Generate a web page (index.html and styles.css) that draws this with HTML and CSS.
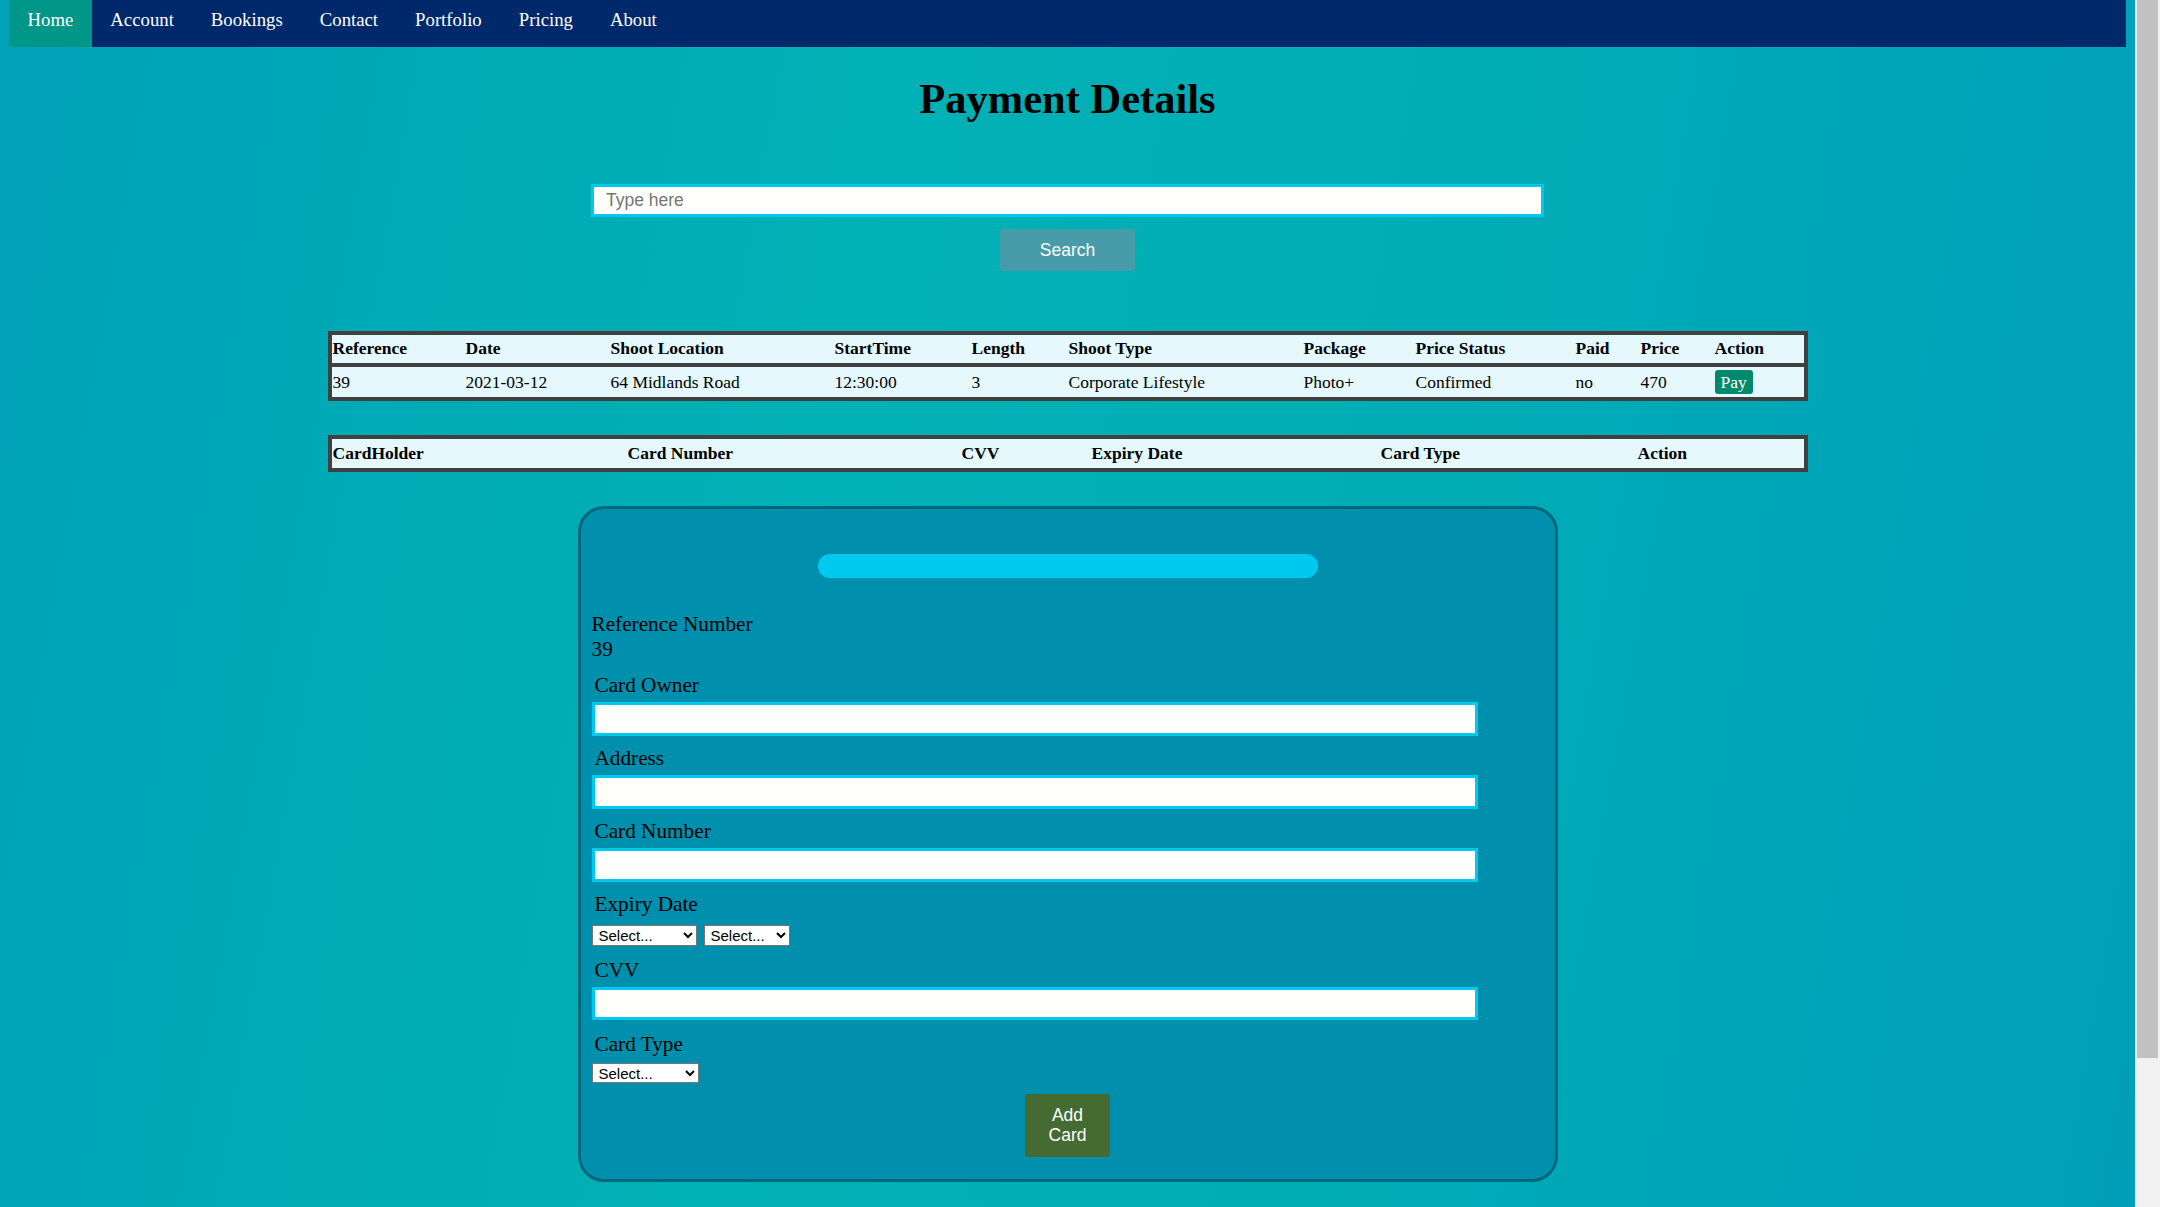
FILE: index.html
```html
<!DOCTYPE html>
<html lang="en">
<head>
<meta charset="utf-8">
<title>Payment Details</title>
<link rel="stylesheet" href="styles.css">
</head>
<body>
<div class="page">
  <nav class="topnav">
    <a class="nav-link active" href="#">Home</a>
    <a class="nav-link" href="#">Account</a>
    <a class="nav-link" href="#">Bookings</a>
    <a class="nav-link" href="#">Contact</a>
    <a class="nav-link" href="#">Portfolio</a>
    <a class="nav-link" href="#">Pricing</a>
    <a class="nav-link" href="#">About</a>
  </nav>

  <h1 class="title">Payment Details</h1>

  <form class="search">
    <input class="search-input" type="text" placeholder="Type here">
    <button class="search-btn" type="button">Search</button>
  </form>

  <table class="grid bookings">
    <colgroup>
      <col><col><col><col><col><col><col><col><col><col><col>
    </colgroup>
    <thead>
      <tr>
        <th>Reference</th><th>Date</th><th>Shoot Location</th><th>StartTime</th><th>Length</th><th>Shoot Type</th><th>Package</th><th>Price Status</th><th>Paid</th><th>Price</th><th>Action</th>
      </tr>
    </thead>
    <tbody>
      <tr>
        <td>39</td><td>2021-03-12</td><td>64 Midlands Road</td><td>12:30:00</td><td>3</td><td>Corporate Lifestyle</td><td>Photo+</td><td>Confirmed</td><td>no</td><td>470</td><td><button class="pay-btn" type="button">Pay</button></td>
      </tr>
    </tbody>
  </table>

  <table class="grid cards">
    <colgroup>
      <col><col><col><col><col><col>
    </colgroup>
    <thead>
      <tr>
        <th>CardHolder</th><th>Card Number</th><th>CVV</th><th>Expiry Date</th><th>Card Type</th><th>Action</th>
      </tr>
    </thead>
  </table>

  <form class="card">
    <div class="card-bar"></div>
    <div class="ref-label">Reference Number</div>
    <div class="ref-value">39</div>

    <label class="field-label first">Card Owner</label>
    <input class="field-input" type="text">

    <label class="field-label">Address</label>
    <input class="field-input" type="text">

    <label class="field-label">Card Number</label>
    <input class="field-input" type="text">

    <label class="field-label">Expiry Date</label>
    <div class="select-row">
      <select class="field-select w-month"><option>Select...</option></select>
      <select class="field-select w-year"><option>Select...</option></select>
    </div>

    <label class="field-label loose">CVV</label>
    <input class="field-input short" type="text">

    <label class="field-label loose">Card Type</label>
    <select class="field-select w-type type-select"><option>Select...</option></select>

    <button class="add-btn" type="button">Add Card</button>
  </form>
</div>
<div class="scrollbar"><div class="scrollbar-thumb"></div></div>
</body>
</html>
```

FILE: styles.css
```css
* { box-sizing: border-box; }

html, body {
  margin: 0;
  height: 100%;
}

body {
  display: flex;
  overflow: hidden;
  background: #f1f1f1;
  font-family: "Liberation Serif", "Times New Roman", serif;
  color: #000;
}

.page {
  flex: 1;
  min-width: 0;
  padding: 0 9px;
  background: linear-gradient(100deg, #00a2b7 0%, #00b1b5 38%, #00aeb6 60%, #009fb9 100%);
}

.scrollbar {
  flex: none;
  width: 25px;
  padding: 0 2px;
}

.scrollbar-thumb {
  height: 1058px;
  background: #c1c1c1;
}

/* nav */
.topnav {
  display: flex;
  height: 47px;
  background: #00296b;
}

.nav-link {
  color: #fff;
  text-decoration: none;
  font-size: 18.75px;
  line-height: 22px;
  padding: 9px 18.5px 16px;
}

.nav-link.active { background: #009688; }

/* title */
.title {
  margin: 28px 0 0;
  text-align: center;
  font-size: 42.5px;
  line-height: 48px;
  font-weight: bold;
}

/* search */
.search {
  display: flex;
  flex-direction: column;
  align-items: center;
  margin: 61px 0 0;
}

.search-input {
  width: 953px;
  height: 33px;
  border: 3px solid #00c9ef;
  background: #fffffc;
  padding: 0 12px;
  font: 17.5px "Liberation Sans", Arial, sans-serif;
  outline: none;
}

.search-input::placeholder { color: #767676; }

.search-btn {
  margin-top: 12px;
  width: 135px;
  height: 42px;
  background: #489ba9;
  color: #fff;
  border: none;
  border-radius: 3px;
  font: 17.5px "Liberation Sans", Arial, sans-serif;
}

/* tables */
.grid {
  width: 1480px;
  margin: 60px auto 0;
  table-layout: fixed;
  border-collapse: separate;
  border-spacing: 0;
  border: 4px solid #404040;
  background: #e4f8fd;
  font-size: 17.5px;
}

.grid th,
.grid td {
  text-align: left;
  white-space: nowrap;
  padding: 2px 2px 3px 1px;
  line-height: 23px;
}

.grid th { font-weight: bold; }

.bookings thead th { border-bottom: 4px solid #404040; }

.bookings td {
  padding: 3px 2px 3px 1px;
  line-height: 24px;
}

.bookings col:nth-child(1) { width: 133px; }
.bookings col:nth-child(2) { width: 145px; }
.bookings col:nth-child(3) { width: 224px; }
.bookings col:nth-child(4) { width: 137px; }
.bookings col:nth-child(5) { width: 97px; }
.bookings col:nth-child(6) { width: 235px; }
.bookings col:nth-child(7) { width: 112px; }
.bookings col:nth-child(8) { width: 160px; }
.bookings col:nth-child(9) { width: 65px; }
.bookings col:nth-child(10) { width: 74px; }
.bookings col:nth-child(11) { width: 90px; }

.cards { margin-top: 34px; }
.cards th { padding: 3px 2px 3px 1px; }

.cards col:nth-child(1) { width: 295px; }
.cards col:nth-child(2) { width: 334px; }
.cards col:nth-child(3) { width: 130px; }
.cards col:nth-child(4) { width: 289px; }
.cards col:nth-child(5) { width: 257px; }
.cards col:nth-child(6) { width: 167px; }

.pay-btn {
  font: 17.5px "Liberation Serif", "Times New Roman", serif;
  line-height: 20px;
  padding: 2px 6px;
  background: #008a6b;
  color: #fff;
  border: none;
  border-radius: 3px;
}

/* card form */
.card {
  width: 980px;
  margin: 34px auto 0;
  border: 3px solid #00677f;
  border-radius: 26px;
  background: #008fad;
  padding: 45px 11px 22px;
  display: flex;
  flex-direction: column;
  align-items: flex-start;
  font-size: 21.25px;
  line-height: 25px;
}

.card-bar {
  align-self: center;
  width: 500px;
  height: 24px;
  border-radius: 12px;
  background: #00c9ef;
  margin-bottom: 34px;
}

.field-label {
  margin: 10px 0 0 3px;
}

.field-label.first { margin-top: 11px; }
.field-label.loose { margin-top: 12px; }

.field-input {
  width: 886px;
  height: 34px;
  margin-top: 4px;
  border: 3px solid #00c9ef;
  background: #fffffc;
  outline: none;
}

.field-input.short { height: 33px; }

.select-row {
  display: flex;
  gap: 7px;
  margin-top: 8px;
}

.field-select {
  height: 21px;
  font: 15px "Liberation Sans", Arial, sans-serif;
  color: #000;
  border: 1px solid #767676;
  border-radius: 0;
  background: #fff;
  padding: 0 0 0 2px;
}

.w-month { width: 105px; }
.w-year { width: 86px; }
.w-type { width: 107px; }

.type-select {
  margin-top: 6px;
  height: 20px;
}

.add-btn {
  align-self: center;
  margin-top: 11px;
  width: 85px;
  padding: 11px 12px 12px;
  font: 17.5px "Liberation Sans", Arial, sans-serif;
  line-height: 20px;
  background: #456b33;
  color: #fff;
  border: none;
  border-radius: 2px;
}
```
